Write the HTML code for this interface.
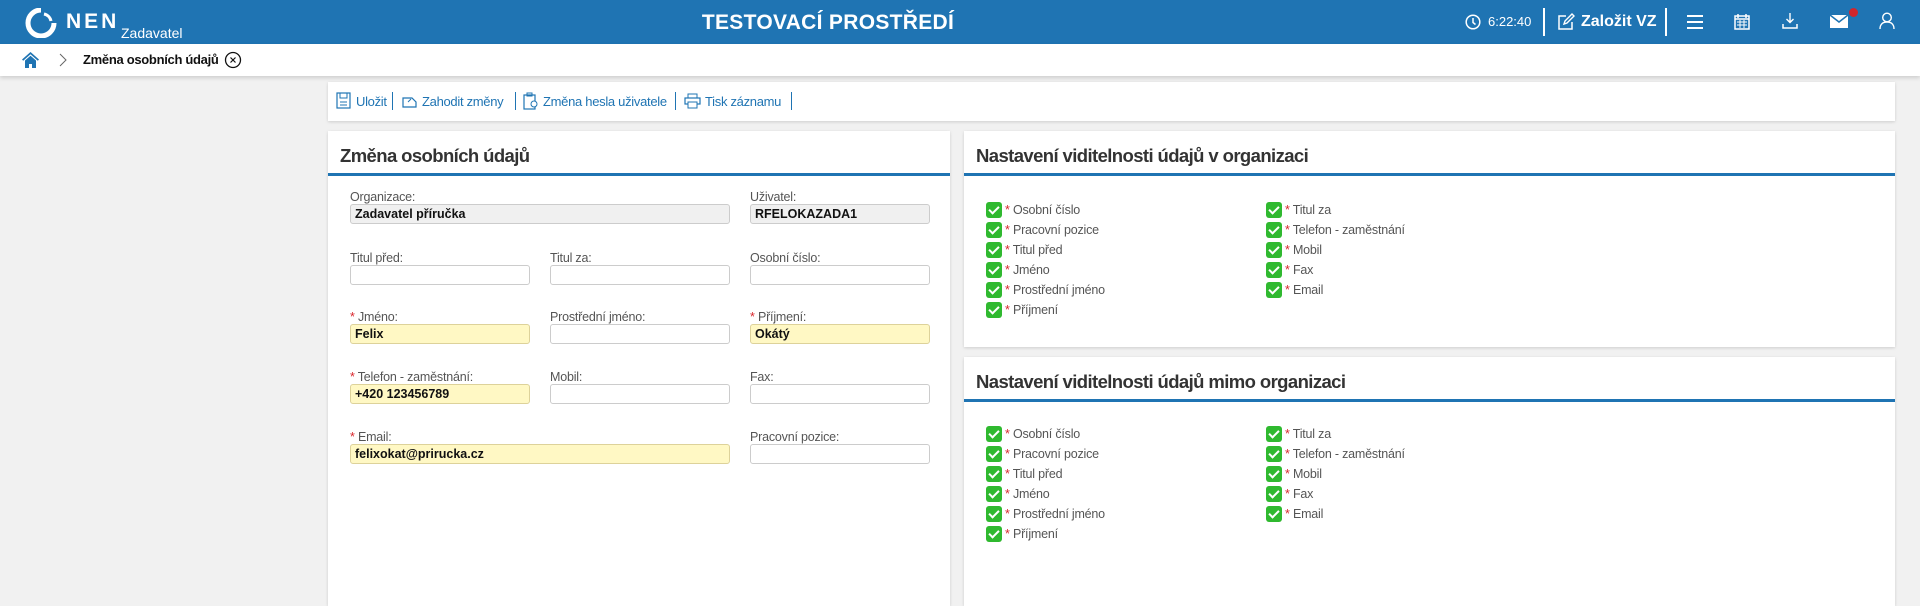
<!DOCTYPE html>
<html><head><meta charset="utf-8"><style>
*{box-sizing:border-box;margin:0;padding:0}
html{width:1920px;height:606px;overflow:hidden}
body{width:1920px;height:606px;overflow:hidden;background:#f1f1f1;font-family:"Liberation Sans",sans-serif;position:relative;color:#222}
.top{position:absolute;left:0;top:0;width:1920px;height:44px;background:#1f74b3;color:#fff}
.abs{position:absolute}
.bc{position:absolute;top:44px;left:0;width:1920px;height:32px;background:#fff;box-shadow:0 2px 4px rgba(0,0,0,.15)}
.panel{position:absolute;background:#fff;box-shadow:0 1px 3px rgba(0,0,0,.15)}
.ptitle{position:absolute;left:12px;top:14px;font-size:18.5px;font-weight:bold;color:#333;letter-spacing:-.6px}
.pline{position:absolute;left:0;right:0;top:42px;height:3px;background:#1f74b3}
.lbl{position:absolute;font-size:12.5px;color:#555;letter-spacing:-.2px}
.lbl b{color:#d9262c;font-weight:normal}
.inp{position:absolute;height:20px;border:1px solid #ccc;border-radius:3px;background:#fff;font-size:12.5px;font-weight:bold;padding:2px 4px;color:#111}
.ro{background:#f0f0f0}
.req{background:#fff8c4;border-color:#ddd29a}
.cb{position:absolute;font-size:12.5px;color:#555;height:20px;line-height:16px;letter-spacing:-.2px}
.cb i{display:inline-block;width:16px;height:16px;background:#2fb92f;border-radius:3px;vertical-align:middle;margin-right:3px;position:relative;top:-1px}
.cb i:after{content:"";position:absolute;left:5px;top:2px;width:4px;height:8px;border:solid #fff;border-width:0 2px 2px 0;transform:rotate(45deg)}
.cb b{color:#d9262c;font-weight:normal}
.tb{position:absolute;top:94px;font-size:13px;color:#1f74b3;letter-spacing:-.3px}
.sep{position:absolute;top:92px;width:1px;height:18px;background:#1f74b3}
</style></head><body>
<div class="top">
  <svg class="abs" style="left:25px;top:8px" width="33" height="30" viewBox="0 0 33 30"><path d="M16 2 A13 13 0 1 0 29 15" fill="none" stroke="#fff" stroke-width="5"/><path d="M19 6 A9 9 0 0 1 26 13" fill="none" stroke="#fff" stroke-width="3"/></svg>
  <div class="abs" style="left:66px;top:10px;font-size:21px;font-weight:bold;letter-spacing:3px">NEN</div>
  <div class="abs" style="left:121px;top:25px;font-size:14px">Zadavatel</div>
  <div class="abs" style="left:0;width:1656px;top:11px;text-align:center;font-size:21px;font-weight:bold;letter-spacing:.3px">TESTOVACÍ PROSTŘEDÍ</div>
  <svg class="abs" style="left:1465px;top:14px" width="16" height="16" viewBox="0 0 16 16"><circle cx="8" cy="8" r="6.8" fill="none" stroke="#fff" stroke-width="1.5"/><path d="M8 4v4.5l2.5 2" fill="none" stroke="#fff" stroke-width="1.5"/></svg>
  <div class="abs" style="left:1488px;top:14px;font-size:13px">6:22:40</div>
  <div class="abs" style="left:1543px;top:8px;width:2px;height:28px;background:#fff"></div>
  <svg class="abs" style="left:1557px;top:13px" width="18" height="18" viewBox="0 0 18 18"><path d="M9 3H2v13h13V9" fill="none" stroke="#fff" stroke-width="1.5"/><path d="M7 11l1-3 7-7 2 2-7 7z" fill="none" stroke="#fff" stroke-width="1.4"/></svg>
  <div class="abs" style="left:1581px;top:13px;font-size:16px;font-weight:bold">Založit VZ</div>
  <div class="abs" style="left:1665px;top:8px;width:2px;height:28px;background:#fff"></div>
  <svg class="abs" style="left:1686px;top:14px" width="18" height="16"><path d="M1 2h16M1 8h16M1 14h16" stroke="#fff" stroke-width="2"/></svg>
  <svg class="abs" style="left:1734px;top:13px" width="16" height="17" viewBox="0 0 16 17"><rect x="1" y="3" width="14" height="13" fill="none" stroke="#fff" stroke-width="1.5"/><path d="M1 6h14M4 1v4M12 1v4" stroke="#fff" stroke-width="1.5"/><path d="M3 9h10M3 12h10M6 7v8M10 7v8" stroke="#fff" stroke-width="1"/></svg>
  <svg class="abs" style="left:1782px;top:12px" width="16" height="18" viewBox="0 0 16 18"><path d="M8 1v9M4.5 7l3.5 3.5L11.5 7" fill="none" stroke="#fff" stroke-width="1.4"/><path d="M1 12v4h14v-4" fill="none" stroke="#fff" stroke-width="1.5"/></svg>
  <svg class="abs" style="left:1830px;top:15px" width="18" height="14"><rect x="0" y="0" width="18" height="13" fill="#fff"/><path d="M0 0l9 7 9-7" fill="none" stroke="#1f74b3" stroke-width="1.5"/></svg>
  <div class="abs" style="left:1849px;top:8px;width:9px;height:9px;border-radius:50%;background:#d0262c"></div>
  <svg class="abs" style="left:1879px;top:12px" width="16" height="18" viewBox="0 0 16 18"><circle cx="8" cy="5.5" r="4.3" fill="none" stroke="#fff" stroke-width="1.4"/><path d="M1 17c0-5 3-7 7-7s7 2 7 7" fill="none" stroke="#fff" stroke-width="1.4"/></svg>
</div>
<div class="bc">
  <svg class="abs" style="left:22px;top:7px" width="17" height="17" viewBox="0 0 17 17"><path d="M8.5 1L0 8.5l1.2 1.2L8.5 3.3l7.3 6.4L17 8.5z" fill="#1f74b3"/><path d="M3 9.5V17h4v-4h3v4h4V9.5L8.5 4.8z" fill="#1f74b3"/></svg>
  <svg class="abs" style="left:59px;top:9px" width="8" height="14"><path d="M1 1l6 6-6 6" fill="none" stroke="#666" stroke-width="1"/></svg>
  <div class="abs" style="left:83px;top:8px;font-size:13px;font-weight:bold;color:#111;letter-spacing:-.3px">Změna osobních údajů</div>
  <svg class="abs" style="left:224px;top:7px" width="18" height="18"><circle cx="9" cy="9" r="7.5" fill="none" stroke="#111" stroke-width="1.3"/><path d="M6.5 6.5l5 5M11.5 6.5l-5 5" stroke="#111" stroke-width="1.2"/></svg>
</div>
<div class="panel" style="left:328px;top:82px;width:1567px;height:39px"></div>
<svg class="abs" style="left:336px;top:92px" width="15" height="17" viewBox="0 0 15 17"><rect x="1" y="1" width="13" height="15" fill="none" stroke="#1f74b3" stroke-width="1.2"/><rect x="4" y="1" width="7" height="5" fill="none" stroke="#1f74b3"/><path d="M4 10h7M4 13h7" stroke="#1f74b3"/></svg>
<div class="tb" style="left:356px">Uložit</div><div class="sep" style="left:392px"></div>
<svg class="abs" style="left:402px;top:94px" width="16" height="14" viewBox="0 0 16 14"><path d="M1 4h9l4 4v5H1z" fill="none" stroke="#1f74b3" stroke-width="1.2"/><path d="M6 8l3-3" stroke="#1f74b3"/></svg>
<div class="tb" style="left:422px">Zahodit změny</div><div class="sep" style="left:515px"></div>
<svg class="abs" style="left:523px;top:92px" width="16" height="18" viewBox="0 0 16 18"><rect x="1" y="3" width="11" height="14" fill="none" stroke="#1f74b3" stroke-width="1.2"/><rect x="4" y="1" width="5" height="3" fill="none" stroke="#1f74b3"/><circle cx="11" cy="12" r="3" fill="#fff" stroke="#1f74b3"/></svg>
<div class="tb" style="left:543px">Změna hesla uživatele</div><div class="sep" style="left:675px"></div>
<svg class="abs" style="left:684px;top:93px" width="17" height="16" viewBox="0 0 17 16"><rect x="4" y="1" width="9" height="4" fill="none" stroke="#1f74b3"/><rect x="1" y="5" width="15" height="6" fill="none" stroke="#1f74b3" stroke-width="1.2"/><rect x="4" y="9" width="9" height="6" fill="#fff" stroke="#1f74b3"/></svg>
<div class="tb" style="left:705px">Tisk záznamu</div><div class="sep" style="left:791px"></div>

<div class="panel" style="left:328px;top:131px;width:622px;height:475px">
  <div class="ptitle">Změna osobních údajů</div><div class="pline"></div>
</div>
<div class="lbl" style="left:350px;top:190px">Organizace:</div>
<div class="inp ro" style="left:350px;top:204px;width:380px">Zadavatel příručka</div>
<div class="lbl" style="left:750px;top:190px">Uživatel:</div>
<div class="inp ro" style="left:750px;top:204px;width:180px">RFELOKAZADA1</div>

<div class="lbl" style="left:350px;top:251px">Titul před:</div>
<div class="inp" style="left:350px;top:265px;width:180px"></div>
<div class="lbl" style="left:550px;top:251px">Titul za:</div>
<div class="inp" style="left:550px;top:265px;width:180px"></div>
<div class="lbl" style="left:750px;top:251px">Osobní číslo:</div>
<div class="inp" style="left:750px;top:265px;width:180px"></div>

<div class="lbl" style="left:350px;top:310px"><b>*</b> Jméno:</div>
<div class="inp req" style="left:350px;top:324px;width:180px">Felix</div>
<div class="lbl" style="left:550px;top:310px">Prostřední jméno:</div>
<div class="inp" style="left:550px;top:324px;width:180px"></div>
<div class="lbl" style="left:750px;top:310px"><b>*</b> Příjmení:</div>
<div class="inp req" style="left:750px;top:324px;width:180px">Okátý</div>

<div class="lbl" style="left:350px;top:370px"><b>*</b> Telefon - zaměstnání:</div>
<div class="inp req" style="left:350px;top:384px;width:180px">+420 123456789</div>
<div class="lbl" style="left:550px;top:370px">Mobil:</div>
<div class="inp" style="left:550px;top:384px;width:180px"></div>
<div class="lbl" style="left:750px;top:370px">Fax:</div>
<div class="inp" style="left:750px;top:384px;width:180px"></div>

<div class="lbl" style="left:350px;top:430px"><b>*</b> Email:</div>
<div class="inp req" style="left:350px;top:444px;width:380px">felixokat@prirucka.cz</div>
<div class="lbl" style="left:750px;top:430px">Pracovní pozice:</div>
<div class="inp" style="left:750px;top:444px;width:180px"></div>

<div class="panel" style="left:964px;top:131px;width:931px;height:216px">
  <div class="ptitle">Nastavení viditelnosti údajů v organizaci</div><div class="pline"></div>
</div>
<div class="panel" style="left:964px;top:357px;width:931px;height:249px">
  <div class="ptitle">Nastavení viditelnosti údajů mimo organizaci</div><div class="pline"></div>
</div>

<div class="cb" style="left:986px;top:202px"><i></i><b>*</b> Osobní číslo</div>
<div class="cb" style="left:986px;top:222px"><i></i><b>*</b> Pracovní pozice</div>
<div class="cb" style="left:986px;top:242px"><i></i><b>*</b> Titul před</div>
<div class="cb" style="left:986px;top:262px"><i></i><b>*</b> Jméno</div>
<div class="cb" style="left:986px;top:282px"><i></i><b>*</b> Prostřední jméno</div>
<div class="cb" style="left:986px;top:302px"><i></i><b>*</b> Příjmení</div>
<div class="cb" style="left:1266px;top:202px"><i></i><b>*</b> Titul za</div>
<div class="cb" style="left:1266px;top:222px"><i></i><b>*</b> Telefon - zaměstnání</div>
<div class="cb" style="left:1266px;top:242px"><i></i><b>*</b> Mobil</div>
<div class="cb" style="left:1266px;top:262px"><i></i><b>*</b> Fax</div>
<div class="cb" style="left:1266px;top:282px"><i></i><b>*</b> Email</div>

<div class="cb" style="left:986px;top:426px"><i></i><b>*</b> Osobní číslo</div>
<div class="cb" style="left:986px;top:446px"><i></i><b>*</b> Pracovní pozice</div>
<div class="cb" style="left:986px;top:466px"><i></i><b>*</b> Titul před</div>
<div class="cb" style="left:986px;top:486px"><i></i><b>*</b> Jméno</div>
<div class="cb" style="left:986px;top:506px"><i></i><b>*</b> Prostřední jméno</div>
<div class="cb" style="left:986px;top:526px"><i></i><b>*</b> Příjmení</div>
<div class="cb" style="left:1266px;top:426px"><i></i><b>*</b> Titul za</div>
<div class="cb" style="left:1266px;top:446px"><i></i><b>*</b> Telefon - zaměstnání</div>
<div class="cb" style="left:1266px;top:466px"><i></i><b>*</b> Mobil</div>
<div class="cb" style="left:1266px;top:486px"><i></i><b>*</b> Fax</div>
<div class="cb" style="left:1266px;top:506px"><i></i><b>*</b> Email</div>
</body></html>
